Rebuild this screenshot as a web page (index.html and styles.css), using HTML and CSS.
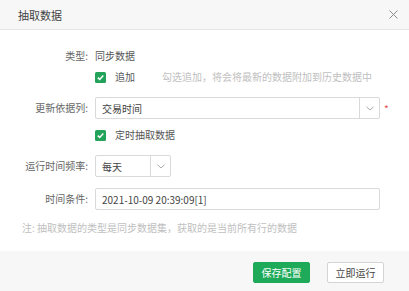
FILE: index.html
```html
<!DOCTYPE html>
<html lang="zh">
<head>
<meta charset="utf-8">
<link rel="stylesheet" href="styles.css">
</head>
<body>
<div class="dialog">
  <div class="header">
    <span class="title">抽取数据</span>
    <svg class="close" width="9" height="9" viewBox="0 0 9 9"><path d="M0.5 0.5L8.5 8.5M8.5 0.5L0.5 8.5" stroke="#8a8a8a" stroke-width="1" fill="none"/></svg>
  </div>
  <div class="body">
    <div class="row r1">
      <span class="label">类型:</span>
      <span class="value">同步数据</span>
    </div>
    <div class="row r2">
      <span class="label"></span>
      <span class="check"><svg width="11" height="11" viewBox="0 0 11 11"><rect width="11" height="11" rx="1.5" fill="#23a35a"/><path d="M2.8 5.6L4.7 7.4L8.3 3.6" stroke="#fff" stroke-width="1.5" fill="none"/></svg></span>
      <span class="value">追加</span>
      <span class="hint">勾选追加，将会将最新的数据附加到历史数据中</span>
    </div>
    <div class="row r3">
      <span class="label">更新依据列:</span>
      <div class="select wide">
        <span class="sel-text">交易时间</span>
        <span class="arrow"><svg width="8" height="5" viewBox="0 0 8 5"><path d="M0.5 0.8L4 4L7.5 0.8" stroke="#aaa" stroke-width="1" fill="none"/></svg></span>
      </div>
      <span class="req">*</span>
    </div>
    <div class="row r4">
      <span class="label"></span>
      <span class="check"><svg width="11" height="11" viewBox="0 0 11 11"><rect width="11" height="11" rx="1.5" fill="#23a35a"/><path d="M2.8 5.6L4.7 7.4L8.3 3.6" stroke="#fff" stroke-width="1.5" fill="none"/></svg></span>
      <span class="value">定时抽取数据</span>
    </div>
    <div class="row r5">
      <span class="label">运行时间频率:</span>
      <div class="select narrow">
        <span class="sel-text">每天</span>
        <span class="arrow"><svg width="8" height="5" viewBox="0 0 8 5"><path d="M0.5 0.8L4 4L7.5 0.8" stroke="#aaa" stroke-width="1" fill="none"/></svg></span>
      </div>
    </div>
    <div class="row r6">
      <span class="label">时间条件:</span>
      <div class="input">2021-10-09 20:39:09[1]</div>
    </div>
    <div class="note">注: 抽取数据的类型是同步数据集，获取的是当前所有行的数据</div>
  </div>
  <div class="footer">
    <button class="btn primary">保存配置</button>
    <button class="btn default">立即运行</button>
  </div>
</div>
</body>
</html>
```
FILE: styles.css
```css
* { box-sizing: border-box; }
html, body { margin: 0; padding: 0; }
body {
  width: 409px;
  height: 291px;
  background: #fff;
  font-family: "Noto Sans CJK SC", "Noto Sans", sans-serif;
  font-size: 10px;
  color: #555;
  overflow: hidden;
}
.dialog { display: flex; flex-direction: column; height: 291px; }
.header {
  height: 30px;
  background: #f7f7f7;
  border-bottom: 1px solid #e6e6e6;
  display: flex;
  align-items: center;
  justify-content: space-between;
  padding: 0 11px 0 18px;
}
.title { font-size: 11px; color: #444; line-height: 14px; }
.close { display: block; margin-top: -1px; }
.body { flex: 1; display: flex; flex-direction: column; }
.row { display: flex; align-items: center; }
.label {
  width: 88px;
  text-align: right;
  margin-right: 7px;
  color: #666;
  line-height: 14px;
  flex: none;
}
.value { line-height: 14px; color: #555; }
.r1 { margin-top: 19px; height: 14px; }
.r2 { margin-top: 7px; height: 14px; }
.r3 { margin-top: 13px; height: 22px; }
.r4 { margin-top: 9px; height: 14px; }
.r5 { margin-top: 13px; height: 22px; }
.r6 { margin-top: 11px; height: 22px; }
.check { width: 11px; height: 11px; margin-right: 9px; display: flex; }
.check svg { display: block; }
.hint { color: #c0c0c0; margin-left: 27px; line-height: 14px; }
.select {
  height: 22px;
  border: 1px solid #d9d9d9;
  border-radius: 2px;
  display: flex;
  align-items: stretch;
  background: #fff;
}
.select.wide { width: 285px; }
.select.narrow { width: 76px; }
.sel-text { flex: 1; padding-left: 6px; display: flex; align-items: center; color: #444; }
.arrow {
  width: 20px;
  border-left: 1px solid #d9d9d9;
  display: flex;
  align-items: center;
  justify-content: center;
}
.arrow svg { display: block; }
.req { color: #e84a4a; margin-left: 4px; font-size: 10px; line-height: 10px; margin-top: 2px; }
.input {
  width: 285px;
  height: 22px;
  border: 1px solid #d9d9d9;
  border-radius: 2px;
  padding-left: 6px;
  display: flex;
  align-items: center;
  color: #444;
}
.note { margin-top: 11px; margin-left: 22px; color: #c0c0c0; line-height: 14px; }
.footer {
  height: 40px;
  background: #f7f7f7;
  display: flex;
  align-items: center;
  justify-content: flex-end;
  padding: 2px 25px 0 0;
  gap: 17px;
}
.btn {
  width: 57px;
  height: 21px;
  font-family: inherit;
  font-size: 10px;
  border-radius: 2px;
  padding: 0;
  margin: 0;
  cursor: pointer;
}
.primary { background: #1eaa59; color: #fff; border: 1px solid #1eaa59; }
.default { background: #fff; color: #444; border: 1px solid #d4d4d4; }
```
